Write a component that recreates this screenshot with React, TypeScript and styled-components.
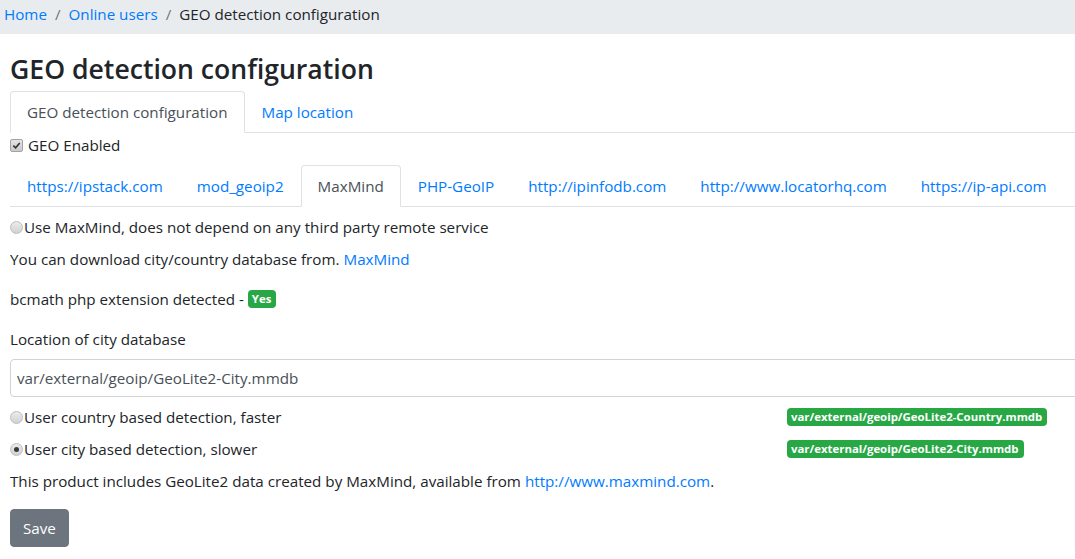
import React from "react";
import styled, { createGlobalStyle, css } from "styled-components";

const GlobalStyle = createGlobalStyle`
  html, body { margin: 0; padding: 0; overflow: hidden; }
  body {
    font-family: "Open Sans", "Noto Sans", sans-serif;
    font-size: 15.2px;
    line-height: 24px;
    color: #212529;
    background: #fff;
  }
  * { box-sizing: border-box; }
`;

const Page = styled.div`
  width: 1075px;
  overflow: hidden;
`;

const Breadcrumb = styled.nav`
  display: flex;
  align-items: flex-start;
  height: 34px;
  padding: 2px 4px 8px;
  background: #e9ecef;
  width: 1200px;
`;

const Crumb = styled.a`
  color: #007bff;
  text-decoration: none;
`;

const Sep = styled.span`
  color: #6c757d;
  padding: 0 8px;
`;

const Current = styled.span`
  color: #212529;
`;

const Main = styled.main`
  padding: 0 10px;
  width: 1300px;
`;

const Title = styled.h1`
  margin: 17px 0 4px;
  font-size: 26.6px;
  line-height: 36px;
  font-weight: 600;
`;

const Tabs = styled.ul<{ $top?: number }>`
  display: flex;
  list-style: none;
  margin: ${(p) => p.$top ?? 0}px 0 0;
  padding: 0;
  border-bottom: 1px solid #dee2e6;
`;

const Tab = styled.li<{ $active?: boolean }>`
  margin-bottom: -1px;
  padding: 8px 16px;
  border: 1px solid transparent;
  border-radius: 4px 4px 0 0;
  color: #007bff;
  white-space: nowrap;
  ${(p) =>
    p.$active &&
    css`
      color: #495057;
      background: #fff;
      border-color: #dee2e6 #dee2e6 #fff;
    `}
`;

const CheckRow = styled.label`
  display: flex;
  align-items: center;
  height: 24px;
`;

const Box = styled.span`
  display: inline-flex;
  align-items: center;
  justify-content: center;
  width: 13px;
  height: 13px;
  margin-right: 5px;
  border: 1px solid #a3a3a3;
  border-radius: 2px;
  background: linear-gradient(#e4e4e4, #c9c9c9);
`;

const Radio = styled.span<{ $checked?: boolean }>`
  position: relative;
  display: inline-block;
  width: 13px;
  height: 13px;
  margin-right: 1px;
  border: 1px solid #bdbdbd;
  border-radius: 50%;
  background: linear-gradient(#ebebeb, #d2d2d2);
  flex: none;
  ${(p) =>
    p.$checked &&
    css`
      &::after {
        content: "";
        position: absolute;
        left: 3px;
        top: 3px;
        width: 5px;
        height: 5px;
        border-radius: 50%;
        background: #3a3a3a;
      }
    `}
`;

const Line = styled.div<{ $top?: number }>`
  display: flex;
  align-items: center;
  height: 24px;
  margin-top: ${(p) => p.$top ?? 0}px;
`;

const OptionRow = styled.div`
  display: grid;
  grid-template-columns: 777px auto;
  align-items: center;
  height: 24px;
  margin-top: 8px;
`;

const Link = styled.a`
  color: #007bff;
  text-decoration: none;
  margin-left: 4px;
`;

const Badge = styled.span`
  display: inline-block;
  justify-self: start;
  padding: 2px 5px 2px 4px;
  font-size: 11.4px;
  line-height: 14px;
  font-weight: 700;
  color: #fff;
  background: #28a745;
  border-radius: 4px;
  white-space: nowrap;
`;

const Label = styled.div`
  margin-top: 16px;
  height: 24px;
  line-height: 24px;
`;

const Input = styled.input`
  display: block;
  width: 1200px;
  height: 38px;
  margin-top: 8px;
  padding: 6px 6px;
  font: inherit;
  color: #495057;
  border: 1px solid #ced4da;
  border-radius: 4px;
  background: #fff;
`;

const Button = styled.button`
  margin-top: 16px;
  height: 38px;
  padding: 6px 12px;
  font: inherit;
  color: #fff;
  background: #6c757d;
  border: 1px solid #6c757d;
  border-radius: 4px;
`;

const Check = () => (
  <svg width="9" height="9" viewBox="0 0 10 10">
    <path d="M1.5 5.2 L4 7.6 L8.6 2.2" fill="none" stroke="#333" strokeWidth="1.8" />
  </svg>
);

export default function App() {
  return (
    <Page>
      <GlobalStyle />
      <Breadcrumb>
        <Crumb href="#">Home</Crumb>
        <Sep>/</Sep>
        <Crumb href="#">Online users</Crumb>
        <Sep>/</Sep>
        <Current>GEO detection configuration</Current>
      </Breadcrumb>
      <Main>
        <Title>GEO detection configuration</Title>
        <Tabs>
          <Tab $active>GEO detection configuration</Tab>
          <Tab>Map location</Tab>
        </Tabs>
        <CheckRow>
          <Box>
            <Check />
          </Box>
          GEO Enabled
        </CheckRow>
        <Tabs $top={8}>
          <Tab>https://ipstack.com</Tab>
          <Tab>mod_geoip2</Tab>
          <Tab $active>MaxMind</Tab>
          <Tab>PHP-GeoIP</Tab>
          <Tab>http://ipinfodb.com</Tab>
          <Tab>http://www.locatorhq.com</Tab>
          <Tab>https://ip-api.com</Tab>
        </Tabs>
        <Line $top={8}>
          <Radio />
          Use MaxMind, does not depend on any third party remote service
        </Line>
        <Line $top={8}>
          You can download city/country database from.<Link href="#">MaxMind</Link>
        </Line>
        <Line $top={16}>
          bcmath php extension detected -&nbsp;<Badge>Yes</Badge>
        </Line>
        <Label>Location of city database</Label>
        <Input defaultValue="var/external/geoip/GeoLite2-City.mmdb" />
        <OptionRow>
          <Line>
            <Radio />
            User country based detection, faster
          </Line>
          <Badge>var/external/geoip/GeoLite2-Country.mmdb</Badge>
        </OptionRow>
        <OptionRow>
          <Line>
            <Radio $checked />
            User city based detection, slower
          </Line>
          <Badge>var/external/geoip/GeoLite2-City.mmdb</Badge>
        </OptionRow>
        <Line $top={8}>
          This product includes GeoLite2 data created by MaxMind, available from
          <Link href="#">http://www.maxmind.com</Link>.
        </Line>
        <Button>Save</Button>
      </Main>
    </Page>
  );
}
